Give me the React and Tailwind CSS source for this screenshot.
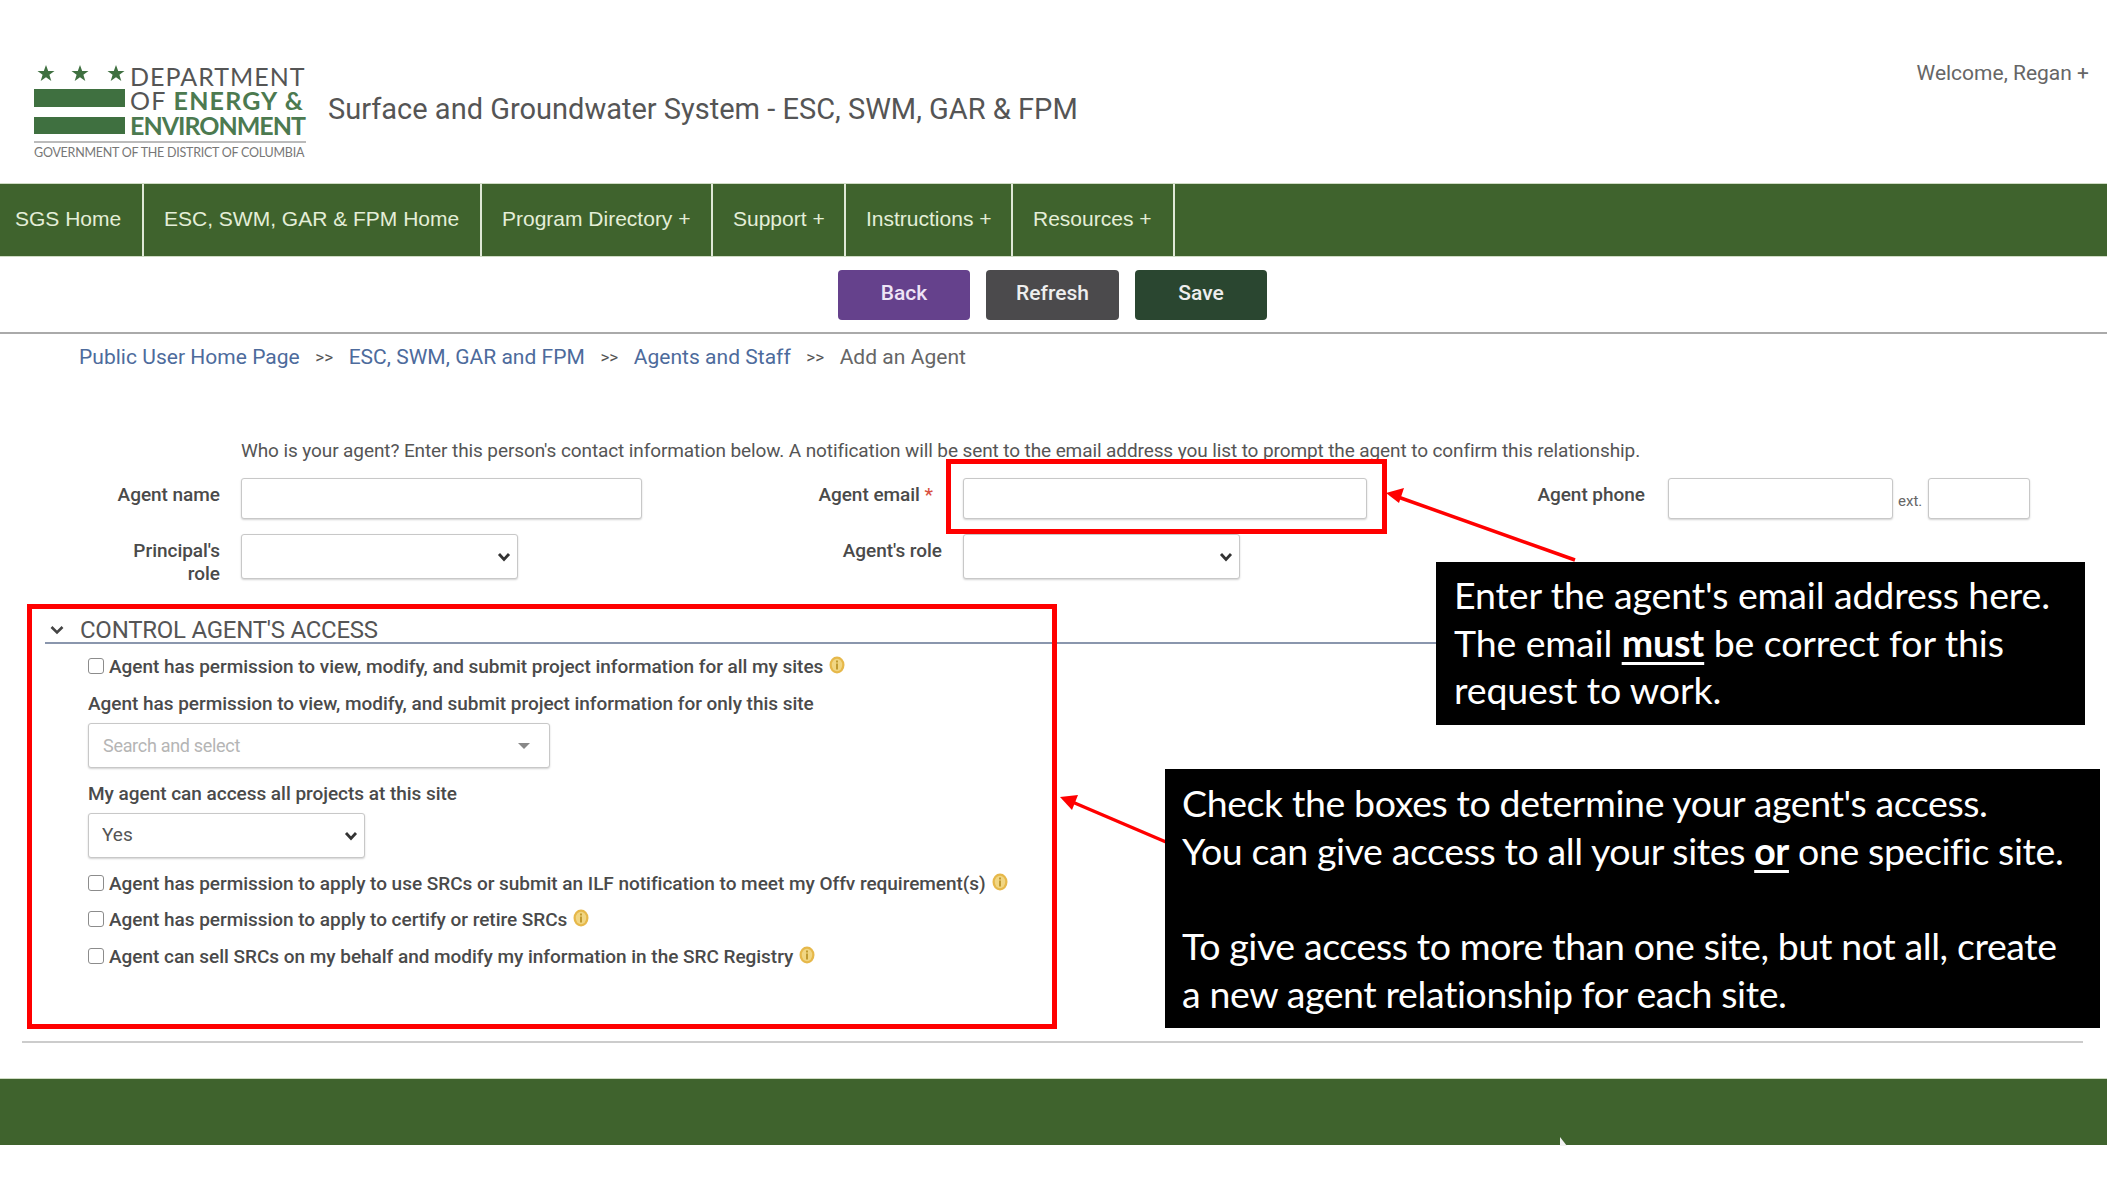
import React from "react";

const navItems = [
  ["SGS Home", "w-[144px] pl-[15px]"],
  ["ESC, SWM, GAR & FPM Home", "w-[338px] pl-[20px]"],
  ["Program Directory +", "w-[231px] pl-[20px]"],
  ["Support +", "w-[133px] pl-[20px]"],
  ["Instructions +", "w-[167px] pl-[20px]"],
  ["Resources +", "w-[162px] pl-[20px]"],
];

function Info() {
  return (
    <svg width="16" height="18" viewBox="0 0 16 18" className="shrink-0 -mt-[5px] ml-[6px]">
      <ellipse cx="8" cy="9" rx="7.5" ry="8.5" fill="#e6b84a" />
      <ellipse cx="8" cy="9" rx="5.2" ry="6.2" fill="#f1d683" />
      <rect x="7" y="7.5" width="2" height="6" fill="#c09a30" />
      <rect x="7" y="4.5" width="2" height="2" fill="#c09a30" />
    </svg>
  );
}

function Check({ children, className = "" }) {
  return (
    <label className={`flex items-center h-[24px] ${className}`}>
      <input type="checkbox" className="appearance-none w-[16px] h-[16px] m-0 shrink-0 -mt-[3px] bg-white border-[1.5px] border-[#8c8c8c] rounded-[3px]" />
      <span className="ml-[5px] text-[19px] font-medium text-[#4a4a4a] tracking-[-0.03px] whitespace-nowrap">{children}</span>
      <Info />
    </label>
  );
}

function Logo() {
  return (
    <div className="w-[272px] h-[100px]">
      <div className="flex h-[78px]">
        <div className="w-[91px] shrink-0">
          <svg width="91" height="24" viewBox="0 2 91 24" className="block">
            <g fill="#3f7040">
              <polygon points="12,6 14.2,12 20.5,12 15.4,15.8 17.3,22 12,18.2 6.7,22 8.6,15.8 3.5,12 9.8,12" />
              <polygon points="46,6 48.2,12 54.5,12 49.4,15.8 51.3,22 46,18.2 40.7,22 42.6,15.8 37.5,12 43.8,12" />
              <polygon points="82,6 84.2,12 90.5,12 85.4,15.8 87.3,22 82,18.2 76.7,22 78.6,15.8 73.5,12 79.8,12" />
            </g>
          </svg>
          <div className="h-[18px] bg-[#3f7040] mt-[4px]" />
          <div className="h-[17px] bg-[#3f7040] mt-[10px]" />
        </div>
        <div className="ml-[5px] pt-[3px] font-['Lato',sans-serif] text-[25px] leading-[24.4px] whitespace-nowrap">
          <div className="text-[#555] tracking-[1px]">DEPARTMENT</div>
          <div className="text-[#555] tracking-[1.2px]">
            OF <span className="font-bold text-[#4c7a50]">ENERGY &amp;</span>
          </div>
          <div className="font-bold text-[#4c7a50] tracking-[-1px]">ENVIRONMENT</div>
        </div>
      </div>
      <div className="h-[2px] bg-[#bbb] mt-[2px]" />
      <div className="font-['Lato',sans-serif] text-[12.5px] leading-[15px] mt-[2px] text-[#777] whitespace-nowrap tracking-[-0.25px]">
        GOVERNMENT OF THE DISTRICT OF COLUMBIA
      </div>
    </div>
  );
}

const inputCls = "border border-[#c8c8c8] rounded-[3px] bg-white shadow-[0_1px_2px_rgba(0,0,0,0.18)] block";
const labelCls = "text-[19px] font-medium text-[#4a4a4a] tracking-[-0.03px] text-right";

function Select({ className = "", children, ...rest }) {
  return (
    <div className={`relative w-[277px] h-[45px] ${className}`}>
      <select {...rest} className={`${inputCls} appearance-none w-full h-full pl-[13px] text-[19px] text-[#555]`}>
        {children}
      </select>
      <svg width="14" height="10" viewBox="0 0 14 10" className="absolute right-[7px] top-[18px] pointer-events-none">
        <path d="M2 2 L7 7.5 L12 2" fill="none" stroke="#333" strokeWidth="2.8" />
      </svg>
    </div>
  );
}

export default function App() {
  return (
    <div className="relative w-[2107px] h-[1185px] overflow-hidden bg-white font-['Roboto',sans-serif]">
      <header className="h-[183px] flex">
        <div className="ml-[34px] mt-[61px]">
          <Logo />
        </div>
        <div className="ml-[22px] mt-[90px] text-[29px] leading-[38px] text-[#555] whitespace-nowrap">
          Surface and Groundwater System - ESC, SWM, GAR &amp; FPM
        </div>
        <div className="ml-auto mr-[18px] mt-[60px] text-[21px] leading-[26px] text-[#666] whitespace-nowrap">
          Welcome, Regan +
        </div>
      </header>

      <nav className="h-[74px] flex bg-[#3f632d] border-y border-[#cfdcc4]">
        {navItems.map(([t, c]) => (
          <div key={t} className={`${c} flex items-center pb-[2px] border-r-2 border-[#dfe8d6] font-['Liberation_Sans',sans-serif] text-[21px] text-[#e4eed8] whitespace-nowrap`}>
            {t}
          </div>
        ))}
      </nav>

      <div className="h-[77px] flex justify-center gap-[16px] pt-[13px] pr-[2px] border-b-2 border-[#aaaaaa]">
        <button className="w-[132px] h-[50px] pb-[2px] rounded-[4px] bg-[#65418c] text-[#eee4f6] text-[21px] font-medium">Back</button>
        <button className="w-[133px] h-[50px] pb-[2px] rounded-[4px] bg-[#4b4a4c] text-[#eeeeee] text-[21px] font-medium">Refresh</button>
        <button className="w-[132px] h-[50px] pb-[2px] rounded-[4px] bg-[#2a4630] text-[#eeeeee] text-[21px] font-medium">Save</button>
      </div>

      <div className="pl-[79px] mt-[10px] h-[28px] flex items-center text-[21px] tracking-[0.03px] whitespace-nowrap">
        <span className="text-[#4d6b9c]">Public User Home Page</span>
        <span className="text-[#555] text-[17px] mx-[15.5px]">&gt;&gt;</span>
        <span className="text-[#4d6b9c]">ESC, SWM, GAR and FPM</span>
        <span className="text-[#555] text-[17px] mx-[15.5px]">&gt;&gt;</span>
        <span className="text-[#4d6b9c]">Agents and Staff</span>
        <span className="text-[#555] text-[17px] mx-[15.5px]">&gt;&gt;</span>
        <span className="text-[#666]">Add an Agent</span>
      </div>

      <div className="pl-[241px] mt-[66px] h-[26px] leading-[26px] text-[19px] text-[#555] tracking-[-0.1px] whitespace-nowrap">
        Who is your agent? Enter this person's contact information below. A notification will be sent to the email address you list to prompt the agent to confirm this relationship.
      </div>

      <div className="flex mt-[14px] h-[41px]">
        <div className={`${labelCls} w-[220px] mt-[3px]`}>Agent name</div>
        <input className={`${inputCls} ml-[21px] w-[401px] h-[41px] shrink-0`} />
        <div className={`${labelCls} w-[291px] mt-[3px]`}>
          Agent email <span className="text-[#d9503f]">*</span>
        </div>
        <input className={`${inputCls} ml-[30px] w-[404px] h-[41px] shrink-0`} />
        <div className={`${labelCls} w-[278px] mt-[3px]`}>Agent phone</div>
        <input className={`${inputCls} ml-[23px] w-[225px] h-[41px] shrink-0`} />
        <div className="w-[35px] pl-[5px] mt-[12px] text-[15px] text-[#666]">ext.</div>
        <input className={`${inputCls} w-[102px] h-[41px] shrink-0`} />
      </div>

      <div className="flex mt-[15px] h-[45px]">
        <div className={`${labelCls} w-[220px] leading-[23px] mt-[5px]`}>
          Principal's
          <br />
          role
        </div>
        <Select className="ml-[21px]" />
        <div className={`${labelCls} w-[424px] mt-[3px]`}>Agent's role</div>
        <Select className="ml-[21px]" />
      </div>

      <div className="ml-[45px] mt-[26px] w-[1400px] h-[39px] border-b-2 border-[#8a96ad] flex items-end">
        <svg width="16" height="12" viewBox="0 0 16 12" className="ml-[4px] mb-[6px]">
          <path d="M2.5 3 L8 8.5 L13.5 3" fill="none" stroke="#444" strokeWidth="2.6" />
        </svg>
        <span className="ml-[15px] text-[24px] leading-[24px] text-[#555] tracking-[-0.25px] whitespace-nowrap">CONTROL AGENT'S ACCESS</span>
      </div>

      <div className="pl-[88px]">
        <Check className="mt-[11px]">Agent has permission to view, modify, and submit project information for all my sites</Check>
        <div className="mt-[13px] h-[24px] leading-[24px] text-[19px] font-medium text-[#4a4a4a] tracking-[-0.03px] whitespace-nowrap">
          Agent has permission to view, modify, and submit project information for only this site
        </div>
        <div className={`${inputCls} mt-[7px] w-[462px] h-[45px] flex items-center pl-[14px] pr-[18px]`}>
          <span className="text-[18px] text-[#b5b5b5] tracking-[-0.3px]">Search and select</span>
          <svg width="14" height="8" viewBox="0 0 14 8" className="ml-auto">
            <polygon points="1,1 13,1 7,7" fill="#888" />
          </svg>
        </div>
        <div className="mt-[14px] h-[24px] leading-[24px] text-[19px] font-medium text-[#4a4a4a] tracking-[-0.03px] whitespace-nowrap">
          My agent can access all projects at this site
        </div>
        <Select defaultValue="Yes" className="mt-[7px]">
          <option>Yes</option>
        </Select>
        <Check className="mt-[14px]">Agent has permission to apply to use SRCs or submit an ILF notification to meet my Offv requirement(s)</Check>
        <Check className="mt-[12px]">Agent has permission to apply to certify or retire SRCs</Check>
        <Check className="mt-[13px]">Agent can sell SRCs on my behalf and modify my information in the SRC Registry</Check>
      </div>

      <div className="ml-[22px] mt-[72px] w-[2061px] h-[2px] bg-[#cccccc]" />

      <footer className="relative mt-[35px] h-[67px] bg-[#3f632d] border-t border-[#cfdcc4]">
        <svg width="10" height="9" viewBox="0 0 10 9" className="absolute left-[1559px] top-[58px]">
          <path d="M1 0 L1 9 L8 9 Z" fill="#f2f2f2" />
        </svg>
      </footer>

      {/* annotations laid over the page */}
      <div className="absolute left-[946px] top-[459px] w-[441px] h-[75px] border-[5px] border-[#ff0000]" />
      <div className="absolute left-[27px] top-[604px] w-[1030px] h-[425px] border-[5px] border-[#ff0000]" />

      <svg width="2107" height="1185" viewBox="0 0 2107 1185" className="absolute left-0 top-0 pointer-events-none">
        <line x1="1575" y1="560" x2="1398" y2="497" stroke="#ff0000" strokeWidth="3.5" />
        <polygon points="1386,493 1404,488 1399,503" fill="#ff0000" />
        <line x1="1166" y1="842" x2="1070" y2="801" stroke="#ff0000" strokeWidth="3.5" />
        <polygon points="1060,797 1078,795 1072,810" fill="#ff0000" />
      </svg>

      <div className="absolute left-[1436px] top-[562px] w-[649px] h-[163px] bg-black pl-[18px] pt-[9px] text-white font-['Lato',sans-serif] text-[37.5px] leading-[47.7px] whitespace-nowrap tracking-[-0.12px]">
        <div>Enter the agent's email address here.</div>
        <div>
          The email <b className="underline decoration-[3px] underline-offset-[5px]">must</b> be correct for this
        </div>
        <div>request to work.</div>
      </div>

      <div className="absolute left-[1165px] top-[769px] w-[935px] h-[259px] bg-black pl-[17px] pt-[10px] text-white font-['Lato',sans-serif] text-[37.5px] leading-[47.7px] whitespace-nowrap tracking-[-0.4px]">
        <div>Check the boxes to determine your agent's access.</div>
        <div>
          You can give access to all your sites <b className="underline decoration-[3px] underline-offset-[5px]">or</b> one specific site.
        </div>
        <div className="h-[47.7px]" />
        <div>To give access to more than one site, but not all, create</div>
        <div>a new agent relationship for each site.</div>
      </div>
    </div>
  );
}
